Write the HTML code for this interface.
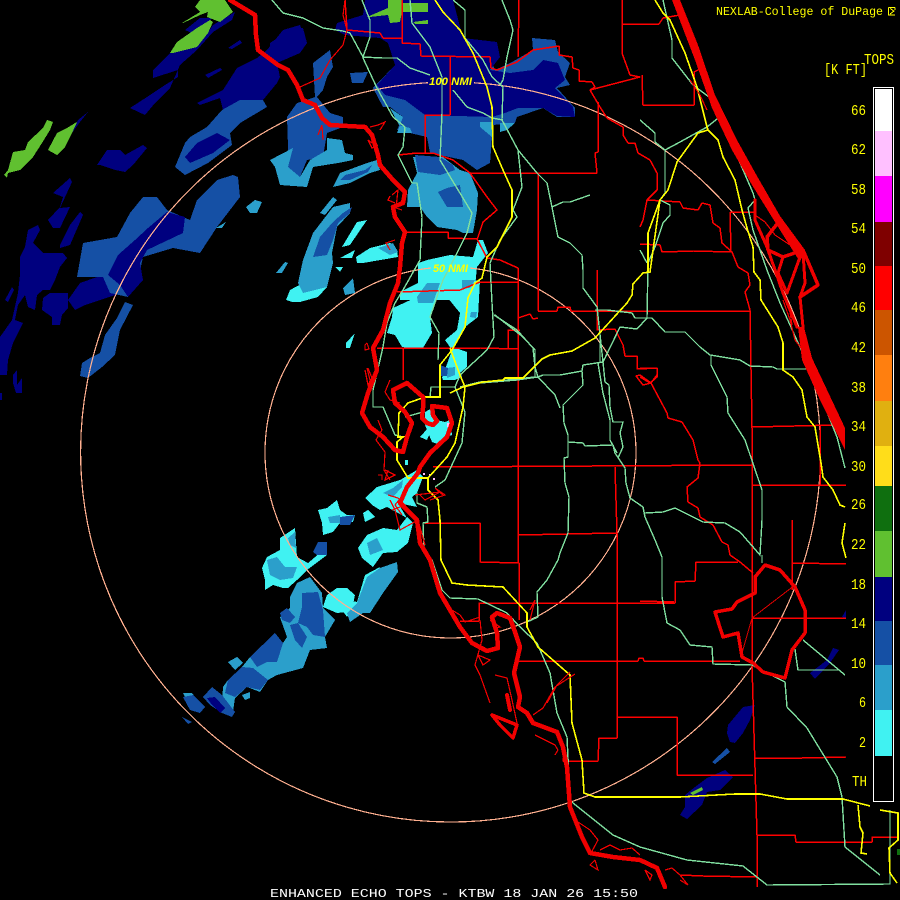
<!DOCTYPE html>
<html lang="en">
<head>
<meta charset="utf-8">
<title>Enhanced Echo Tops - KTBW</title>
<style>
html,body{margin:0;padding:0;background:#000;width:900px;height:900px;overflow:hidden}
svg{display:block;shape-rendering:crispEdges}
.c{fill:#40f2f2}.s{fill:#2b9fcb}.b{fill:#1550a5}.n{fill:#00007f}.g{fill:#60c030}
.r{fill:none;stroke:#ff0000;stroke-width:1.5;stroke-linejoin:round}
.rt{fill:none;stroke:#f00000;stroke-width:1.2}
.t{fill:none;stroke:#f00000;stroke-linejoin:round;stroke-linecap:round}
.v{fill:none;stroke:#80e0a0;stroke-width:1.4}
.y{fill:none;stroke:#ffff00;stroke-width:1.6}
text{font-family:"Liberation Mono",monospace;fill:#ffff00}
.l{font-size:14.5px}
</style>
</head>
<body>
<svg width="900" height="900" viewBox="0 0 900 900" xmlns="http://www.w3.org/2000/svg">
<rect width="900" height="900" fill="#000"/>

<!-- NAVY -->
<g class="n">
<polygon points="130,108 147,97 165,85 178,77 178,70 153,78 153,70 170,53 197,47 213,25 235,12 232,20 213,32 197,50 180,65 170,88 155,103 145,115"/>
<polygon points="197,103 223,90 237,68 257,58 267,50 283,30 300,25 307,43 300,53 277,63 280,77 277,83 263,100 240,107 223,110 220,98 200,105"/>
<polygon points="185,30 200,18 213,18 192,33"/>
<polygon points="228,48 240,40 242,43 232,49"/>
<polygon points="205,75 220,68 222,70 208,78"/>
<polygon points="270,43 290,30 303,28 307,43 300,53 277,63 280,77 270,88"/>
<polygon points="97,165 107,150 120,150 125,155 143,145 147,148 133,165 125,172 115,170 100,165"/>
<polygon points="48,220 60,207 63,197 53,193 70,178 72,182 60,208 70,207 60,228 53,228"/>
<polygon points="60,245 70,225 80,212 83,215 70,245 60,248"/>
<polygon points="20,257 25,247 28,230 38,225 40,230 33,243 43,253 63,253 67,258 60,267 55,280 50,290 43,290 37,295 35,310 28,307 25,295 18,305 15,320 23,323 13,343 8,360 7,375 0,375 0,337 12,320 18,293 20,275"/>
<polygon points="5,300 12,287 14,290 8,302"/>
<polygon points="13,375 17,370 17,385 22,378 22,393 16,393 13,383"/>
<polygon points="0,393 2,393 2,400 0,400"/>
<polygon points="42,310 43,298 50,293 68,293 68,308 62,315 60,325 52,325 52,317"/>
<polygon points="68,300 80,283 97,277 103,260 135,260 128,290 115,295 100,300 85,305 75,310"/>
<polygon points="727,733 728,725 743,707 755,705 750,720 743,733 735,743 730,742"/>
<polygon points="680,815 685,807 685,795 695,787 707,778 725,770 733,777 720,790 707,792 702,805 687,819"/>
<polygon points="810,673 827,660 833,648 839,650 830,663 815,679"/>
<polygon points="842,617 846,610 846,618"/>
</g>

<!-- BLUE 10 -->
<g class="b">
<polygon points="80,376 82,363 90,358 100,353 105,335 117,318 125,302 133,305 120,330 117,345 115,355 102,367 88,378"/>
<polygon points="175,167 185,143 190,137 207,127 222,110 240,100 263,100 267,107 240,123 230,133 232,145 208,163 185,175"/>
<polygon points="238,177 240,197 217,227 200,253 173,248 143,257 138,280 128,297 110,293 103,277 77,277 83,243 117,237 130,213 143,197 157,197 167,210 190,220 197,200 217,180 233,175"/>
<polygon points="373,88 383,107 390,107 403,117 397,130 427,137 430,153 463,160 477,170 490,163 493,125 515,123 517,117 543,108 557,117 575,117 575,108 557,88 570,85 565,77 570,63 558,52 555,40 532,38 533,50 512,62 495,70 490,57 400,60"/>
<polygon points="288,147 287,117 297,103 315,97 313,63 330,50 333,67 327,77 323,90 317,97 330,113 343,117 343,127 327,133 323,157 307,160 300,177 287,167"/>
<polygon points="350,73 368,72 363,83 352,83"/>
</g>
<g class="n">
<polygon points="388,43 380,38 345,35 335,30 337,23 363,15 365,0 453,0 463,38 497,42 500,57 490,70 510,73 533,70 543,60 558,63 565,80 555,88 573,107 575,117 557,116 543,108 518,108 505,113 492,117 425,115 405,100 385,95 377,85 395,65"/>
<polygon points="185,157 197,143 217,133 230,140 213,153 190,163"/>
<polygon points="167,212 185,217 183,233 147,250 140,263 143,280 128,297 120,285 108,275 118,255 135,240 148,228"/>
</g>

<!-- 6 KFT -->
<g class="s">
<polygon points="270,160 293,148 288,167 300,177 310,160 327,150 327,138 342,140 345,153 353,155 353,160 338,163 313,167 307,187 280,185 275,167"/>
<polygon points="333,187 340,173 367,163 377,160 380,170 370,173 350,183"/>
<polygon points="408,190 417,173 413,157 443,157 460,170 470,173 478,193 477,210 473,233 463,233 457,230 437,227 427,217 420,207 407,207"/>
<polygon points="480,122 493,122 492,137 480,127"/>
<polygon points="500,123 515,123 507,130 500,132"/>
<polygon points="390,108 403,117 397,133 412,133 410,128 399,125"/>
<polygon points="276,273 285,262 288,263 282,273"/>
<polygon points="320,213 333,197 337,200 325,215"/>
<polygon points="343,288 353,278 355,293 345,295"/>
<polygon points="246,207 255,200 262,202 257,213 250,213"/>
<polygon points="216,228 226,222 222,228"/>
</g>
<g class="b">
<polygon points="415,155 440,157 453,165 455,170 440,175 418,172"/>
<polygon points="447,188 460,185 463,207 447,207 438,192"/>
<polygon points="340,180 345,175 365,170 372,165 368,172 350,180"/>
</g>

<!-- CYAN -->
<g class="c">
<polygon points="400,292 418,283 418,263 427,260 450,255 473,257 478,240 483,240 488,253 477,267 475,287 467,300 400,300"/>
<polygon points="393,308 417,297 423,282 463,282 480,280 478,317 465,327 453,347 467,352 467,367 455,377 442,378 452,350 445,340 457,330 460,313 447,297 437,297 430,317 432,333 423,348 410,348 402,347 395,335 387,333 392,317"/>
<polygon points="286,300 290,290 303,283 327,287 318,297 300,302 292,302"/>
<polygon points="356,257 370,248 390,243 397,250 398,257 363,263 357,263"/>
<polygon points="342,247 357,222 367,220 350,245"/>
<polygon points="340,258 355,250 352,258"/>
<polygon points="335,267 343,267 340,272"/>
<polygon points="346,343 355,333 350,348 346,348"/>
<polygon points="442,377 455,368 457,362 462,377 455,380 443,380"/>
<polygon points="425,412 432,408 437,420 445,422 450,420 452,435 447,437 440,445 432,442 425,425"/>
<polygon points="420,437 428,428 432,428 427,440"/>
<polygon points="365,498 377,487 400,480 417,470 423,477 417,493 412,497 417,507 398,503 407,518 387,507 380,510 372,505"/>
<polygon points="405,460 408,460 408,465 405,465"/>
<polygon points="363,513 368,510 375,517 365,522"/>
<polygon points="318,510 327,508 337,500 340,510 347,515 355,515 353,522 340,523 333,532 323,535 322,523"/>
<polygon points="262,568 267,557 280,550 280,538 295,528 297,557 308,563 327,547 327,555 307,570 297,580 288,588 283,588 273,585 265,590 265,580"/>
<polygon points="358,548 367,535 383,528 397,530 407,517 413,523 408,543 397,552 383,553 373,567 362,558"/>
<polygon points="357,602 365,575 380,567 373,580 363,600 347,617 333,597"/>
<polygon points="327,595 337,588 347,588 355,595 353,605 347,612 337,613 323,607"/>
</g>
<g class="s">
<polygon points="298,283 303,260 313,233 333,207 350,203 350,213 337,227 332,253 333,263 327,287 303,293"/>
<polygon points="417,297 427,283 440,283 433,303 418,303"/>
<polygon points="462,280 475,280 470,288 462,288"/>
<polygon points="471,312 477,312 476,318 470,317"/>
<polygon points="378,248 393,243 398,252 390,255"/>
<polygon points="447,368 455,367 455,375 447,378"/>
<polygon points="383,493 393,488 403,480 402,487 393,497"/>
<polygon points="328,517 340,515 340,523 330,523"/>
<polygon points="267,560 277,557 285,567 297,567 293,578 280,580 270,575"/>
<polygon points="288,538 295,532 296,548 290,545"/>
<polygon points="367,543 377,538 383,550 370,555"/>
<polygon points="357,603 367,577 380,568 397,562 398,572 383,593 370,613 363,613 350,622 347,613"/>
<polygon points="280,617 290,608 290,597 297,583 310,577 322,593 323,608 335,620 325,637 327,648 310,650 303,668 277,675 268,680 260,692 247,687 235,698 233,712 228,713 222,703 223,687 228,680 242,667 250,657 275,633 283,643 287,637 282,623"/>
<polygon points="228,662 237,657 243,663 235,670"/>
<polygon points="242,695 250,692 250,698 245,700"/>
<polygon points="183,693 192,693 195,697 185,697"/>
</g>
<g class="b">
<polygon points="313,257 320,237 333,222 343,213 352,207 350,213 338,223 333,240 327,255"/>
<polygon points="440,365 448,368 447,376 441,376"/>
<polygon points="313,552 318,542 327,542 327,555 317,555"/>
<polygon points="302,593 318,592 323,610 325,637 313,635 307,627 298,623 302,607"/>
<polygon points="280,613 287,608 295,617 290,623 282,620"/>
<polygon points="290,625 298,623 307,637 302,648 295,640"/>
<polygon points="250,657 275,633 283,643 277,662 267,662 257,667"/>
<polygon points="228,680 242,667 253,668 268,680 260,690 247,687 235,697 225,693"/>
<polygon points="183,697 193,695 205,707 200,713 190,710"/>
<polygon points="203,697 212,687 222,695 235,712 232,717 222,713 210,705"/>
<polygon points="182,717 192,722 188,724"/>
<polygon points="340,517 355,515 350,525 340,525"/>
<polygon points="712,762 727,748 730,752 715,764"/>
</g>
<polygon class="n" points="207,698 215,697 225,708 220,713 212,705"/>
<g fill="#ffc0ff">
<rect x="447" y="423" width="3" height="4"/><rect x="423" y="473" width="2" height="2"/>
<rect x="433" y="478" width="2" height="2"/><rect x="429" y="474" width="2" height="2"/>
</g>

<!-- GREEN echoes -->
<g class="g">
<polygon points="182,23 200,12 195,7 200,0 225,0 233,12 220,22 207,17 208,12 200,15 183,23"/>
<polygon points="170,53 177,42 197,28 210,20 213,22 208,33 197,47 173,53"/>
<polygon points="4,175 8,170 13,152 25,150 28,142 43,128 47,120 53,122 50,130 42,143 33,157 20,170 8,173 7,178"/>
<polygon points="48,150 57,133 67,128 80,120 72,133 65,147 57,155"/>
<polygon points="367,17 388,8 388,0 402,0 402,3 428,3 428,12 402,12 400,22 390,23 388,15 370,17"/>
<polygon points="413,22 428,20 428,24 415,24"/>
<polygon points="690,793 702,787 703,790 693,795"/>
</g>
<polygon class="n" points="78,120 88,112 80,122 72,133"/>
<rect x="897" y="849" width="3" height="6" fill="#0f6f0f"/>

<!-- Range rings -->
<g fill="none" stroke="#ffb090" stroke-width="1.2">
<path d="M474 82.75 A370 370 0 1 1 428 82.7"/>
<path d="M470 268 A185.5 185.5 0 1 1 431 268"/>
</g>

<!-- COUNTY LINES -->
<g class="r">
<polyline points="345,0 347,30 380,33 383,38 402,38 402,0"/>
<polyline points="402,38 402,43 420,44 421,56 490,57 491,68 497,70 517,62 533,50 559,46 559,55 572,57 573,68 579,70 579,81 592,82 595,87 590,90 640,77 630,75 622,53 622,0"/>
<polyline points="450,57 450,115 425,115 425,153"/>
<polyline points="518,57 519,0"/>
<polyline points="622,24 659,24 663,18 680,15"/>
<polyline points="642,75 643,105 694,105 694,72 700,69"/>
<polyline points="590,90 600,107 607,118 623,127 623,135 628,143 635,143 638,153 650,160 657,173 657,190 647,200 643,220 640,227"/>
<polyline points="598,102 598,152 595,153 597,173 470,173"/>
<polyline points="538,173 538,311"/>
<polyline points="398,155 417,153 433,153 453,160 470,173 487,197 497,210 483,222 477,240"/>
<polyline points="405,232 448,232 448,238 477,239 487,258 500,260 518,268 518,282 480,282 460,290 397,292"/>
<polyline points="518,268 518,349 480,348 377,348"/>
<polyline points="538,311 557,311 558,307 570,307 571,311 750,311"/>
<polyline points="518,318 530,314 533,319 538,318"/>
<polyline points="508,348 508,330 520,330"/>
<polyline points="403,348 403,380"/>
<polyline points="597,270 597,330 615,329 623,345 625,356 637,356 637,369 657,368 657,375 651,383 643,385 636,376 640,375 651,383 667,413 668,418 682,422 693,440 698,460 700,463 698,478 687,487 688,502 698,508 700,517 713,525 722,542 728,545 730,555 740,562 753,573"/>
<polyline points="433,467 752,465"/>
<polyline points="518,349 518,563"/>
<polyline points="425,523 480,523 480,562 519,563 519,620"/>
<polyline points="518,535 617,533"/>
<polyline points="615,467 617,533 617,738 599,738 598,761 563,761 563,758"/>
<polyline points="479,621 479,603 675,603 675,582 695,581 696,562 738,562"/>
<polyline points="460,621 479,621"/>
<polyline points="519,661 638,661 639,658 643,658 644,661 692,661 740,661"/>
<polyline points="618,717 677,717 677,775 753,775"/>
<polyline points="640,601 674,602"/>
<polyline points="792,520 792,590"/>
<polyline points="792,563 846,564"/>
<polyline points="752,618 846,618"/>
<polyline points="752,428 752,665 757,835 757,887"/>
<polyline points="755,758 802,758 846,757"/>
<polyline points="757,835 795,835 796,842 872,842 872,837 898,837"/>
<polyline points="680,875 703,876 757,877"/>
<polyline points="647,200 680,202 683,208 698,210 702,203 710,205 713,223 720,228 722,243 732,252 738,267 748,273 750,285 745,292 750,310 752,428"/>
<polyline points="640,244 660,245 662,252 693,251 732,252"/>
<polyline points="730,212 731,252"/>
<polyline points="730,212 755,212"/>
<polyline points="640,377 650,383 657,377 657,368 640,368"/>
<polyline points="752,427 837,425"/>
<polyline points="820,425 820,485"/>
<polyline points="752,485 846,485"/>
</g>
<polyline points="742,653 752,618 795,585" fill="none" stroke="#e00000" stroke-width="1"/>

<!-- ROADS -->
<g class="v">
<polyline points="272,0 283,13 303,18 323,28 343,31 350,33 363,57 370,37 370,20 362,0"/>
<polyline points="362,57 383,58 397,58 410,68 430,75"/>
<polyline points="363,58 377,88 393,117 405,127 403,147 398,155 412,183 417,183 422,217 420,260 403,290 395,303 387,323 383,347 373,390 373,407 383,407 395,435 403,437"/>
<polyline points="410,0 412,23 430,47 442,77 442,113 440,160 472,213 467,233 455,257 443,280 430,317 439,333 438,360"/>
<polyline points="453,0 465,10 465,38 483,60 492,77 503,87 502,120 518,150 522,187 513,210 517,217 500,240 490,263 492,303 494,337 487,350 460,375 455,387 431,387 430,397"/>
<polyline points="502,0 510,20 513,30 507,57 503,80 500,85"/>
<polyline points="453,90 467,107 483,113 492,118 503,120"/>
<polyline points="518,150 537,173 547,183 552,207 563,202 570,202 590,195"/>
<polyline points="552,207 558,237 570,243 582,255 583,270 583,288 597,307 603,362"/>
<polyline points="494,315 517,330 533,348 535,367 538,377 555,395 560,408"/>
<polyline points="480,383 517,380 538,377 543,375 560,375 582,371 583,365 603,362"/>
<polyline points="582,371 583,385 563,405 564,423 568,435 568,457 564,458 565,483 569,497 568,533 560,553 558,560 547,580 537,592 538,617 527,622"/>
<polyline points="568,442 583,443 585,446 613,445 615,453 625,468 626,483 630,498 643,507 645,517 655,540 662,557 662,597 667,623 680,630 690,645 712,647 713,664 752,665 765,672 785,682 787,707 807,728 837,777 842,797 845,847 880,875"/>
<polyline points="645,513 663,512 675,508 703,522 725,523 740,532 760,555 762,520 762,490 745,440 728,413 727,397 711,365 711,355"/>
<polyline points="595,310 607,310 632,313 635,318 652,318 665,332 685,332 700,347 710,355 740,360 750,366 773,367 777,369 807,369"/>
<polyline points="640,120 655,133 655,142 665,150 665,193 660,200 670,205 670,215 663,223 655,247 648,263 647,318 637,329 620,327 603,362"/>
<polyline points="640,250 647,263"/>
<polyline points="665,150 680,142 707,127 722,115"/>
<polyline points="600,337 600,362"/>
<polyline points="603,362 605,382 609,385 610,407 613,422 623,422 620,433 623,447 618,458"/>
<polyline points="598,363 603,393 610,420 610,440 617,453"/>
<polyline points="663,0 672,40 672,58 693,85 713,100 753,193 755,200 748,208 753,230 767,270 780,303 800,347 813,377 837,437 845,468"/>
<polyline points="495,315 523,337 535,350 535,377 507,380 480,382 460,387"/>
<polyline points="460,375 455,387 465,412 462,443 445,480 435,487"/>
<polyline points="405,417 423,412"/>
<polyline points="417,493 417,503 427,507 428,522 423,523 424,550 432,560 442,590 450,598 478,599 507,613 520,627 537,643 550,673 557,713 567,737 570,800 573,803 613,835 640,847 687,860 743,866 767,885 890,884 890,810"/>
<polyline points="803,640 845,675"/>
<polyline points="795,649 798,670 840,670"/>
<polyline points="762,555 762,563"/>
</g>

<!-- HIGHWAYS -->
<g class="y">
<polyline points="435,0 443,12 460,30 473,53 487,87 492,107 493,147 503,170 512,190 512,217 497,247 487,257 482,278 475,283 468,298 465,327 452,350 440,365 440,397 425,397 408,403 399,413 398,437 403,437 397,442 397,460 408,478 428,478 447,457 455,443 463,407 465,387 460,375 450,348"/>
<polyline points="428,478 428,490 438,500 440,520 441,560 452,583 467,585 503,587 527,613 527,627 538,647 570,675 572,723 582,760 584,793 595,797 680,797 735,794 760,794 787,799 843,799 870,806"/>
<polyline points="450,393 463,387 483,382 503,380 505,378 523,378 542,359 550,355 572,351 595,338 627,303 632,295 633,284 643,273 650,272 660,200 668,190 677,162 698,133 708,130"/>
<polyline points="648,273 648,233 660,200"/>
<polyline points="655,0 663,13 670,20 685,53 697,87 707,127 708,130 718,140 723,157 735,180 742,210 747,228 753,247 754,272 760,280 761,300 778,327 783,343 783,370 793,377 802,390 807,417 815,427 821,463 823,477 833,490 840,505 845,507"/>
<polyline points="845,523 842,543 846,558"/>
<polyline points="858,805 860,827 863,833 861,853 867,854"/>
<polyline points="880,810 898,813 898,840 889,848 890,873 897,883"/>
</g>

<!-- THICK COAST -->
<g class="t">
<polyline stroke-width="4.5" points="230,0 255,15 256,35 258,50 278,65 288,70 297,85 303,100 315,105 322,118 330,125 365,127 372,135 378,155 380,165 393,180 405,192 403,203 393,207 395,217 405,232 402,243 400,267 398,283 390,303 383,330 373,348 377,370 368,393 362,413 370,427 383,437 395,450 403,452 407,437 412,423 405,412 395,403 393,390 407,383 423,397 423,408 422,418 427,423 433,425 437,421 433,415 432,406 447,408 452,423 447,437 430,453 420,467 418,473 407,487 400,503 417,520 420,543 430,560 440,593 460,627 472,643 487,651 498,648 497,633 492,617 497,613 510,618 515,632 520,647 514,673 520,697 518,707 527,713 533,723 557,732 563,747 567,767 570,807 582,837 590,853 613,857 640,860 657,868 665,887"/>
<polyline stroke-width="3.5" points="492,715 517,725 513,738 500,725 492,715"/>
<polyline stroke-width="4" points="507,695 510,710"/>
<polyline stroke-width="3.5" points="755,593 755,577 765,565 780,570 795,587 805,610 805,633 792,650 785,678 763,672 753,663 742,657 738,633 723,637 715,612 732,609 737,602 755,593"/>
<polyline stroke-width="3.5" points="780,220 767,237 768,250 783,257 803,250"/>
<polyline stroke-width="3" points="755,200 755,220 767,247 783,293 797,327"/>
<polyline stroke-width="3" points="783,257 778,273 787,293 800,257"/>
<polyline stroke-width="3" points="803,252 805,283 800,297 803,327"/>
<polyline stroke-width="3.5" points="803,250 818,285 800,297"/>
</g>
<polygon fill="#f00000" points="672,0 680,0 698,45 715,95 737,140 757,176 780,216 805,250 800,262 775,222 752,185 732,150 712,108 695,60"/>
<polygon fill="#f00000" points="798,327 804,327 812,358 845,428 845,450 820,400 802,360"/>

<!-- THIN COAST -->
<g class="rt">
<polyline points="345,0 343,15 347,30 343,45 330,60 320,78 300,87"/>
<polyline points="370,127 378,125 385,122 380,130"/>
<polyline points="372,143 368,140 372,148 378,145"/>
<polyline points="318,135 322,125 323,140"/>
<polyline points="390,196 388,200 395,203"/>
<polyline points="390,250 386,243 395,240"/>
<polyline points="392,195 398,190 396,208 402,210"/>
<polyline points="367,343 365,345 365,350 369,349 367,343"/>
<polyline points="367,368 370,380 368,395 366,400"/>
<polyline points="365,370 368,385 372,378 368,368"/>
<polyline points="390,380 385,392 390,400 400,403"/>
<polyline points="378,420 382,430 376,440 385,452 384,470 390,480"/>
<polyline points="385,470 395,475 385,480 388,470"/>
<polyline points="378,475 382,475 382,480"/>
<polyline points="390,500 395,510 400,530 418,520 425,545"/>
<polyline points="388,495 398,498 405,505 392,510"/>
<polyline points="415,495 440,492 425,500 420,495"/>
<polyline points="430,500 445,495 435,488 443,495"/>
<polyline points="407,490 395,505 402,515"/>
<polyline points="447,607 460,615 465,622 480,617"/>
<polyline points="480,620 482,640 475,665 480,675 490,703"/>
<polyline points="495,675 507,678 512,700 517,723"/>
<polyline points="533,715 543,708 555,687 575,674"/>
<polyline points="547,703 557,685 570,672"/>
<polyline points="490,620 500,627 495,628"/>
<polyline points="530,610 535,600 530,620"/>
<polyline points="478,655 490,660 483,665 478,655"/>
<polyline points="535,735 555,745 558,750 555,755"/>
<polyline points="575,820 590,830 598,840 590,855"/>
<polyline points="600,850 610,845 620,850 632,848 640,855"/>
<polyline points="665,870 672,868 680,875 688,885 680,880"/>
<polyline points="595,860 598,870 590,865 595,860"/>
<polyline points="645,870 652,875 650,880 645,870"/>
<polyline points="755,215 765,222 775,235 790,245"/>
<polyline points="783,300 790,320 795,340 810,360"/>
<polyline points="690,80 700,95 707,110"/>
<polyline points="787,300 790,312 792,325"/>
</g>

<!-- NMI LABELS -->
<text x="429" y="85" font-size="11" font-weight="bold" font-style="italic" textLength="43" lengthAdjust="spacingAndGlyphs" style="font-family:'Liberation Sans',sans-serif">100 NMI</text>
<text x="433" y="272" font-size="11" font-weight="bold" font-style="italic" textLength="35" lengthAdjust="spacingAndGlyphs" style="font-family:'Liberation Sans',sans-serif">50 NMI</text>

<!-- COLOR BAR -->
<rect x="873.5" y="87.5" width="20" height="714" fill="#000" stroke="#fff" stroke-width="1.4"/>
<g>
<rect x="875" y="89" width="17" height="42" fill="#ffffff"/>
<rect x="875" y="131" width="17" height="45" fill="#ffc0ff"/>
<rect x="875" y="176" width="17" height="46" fill="#ff00ff"/>
<rect x="875" y="222" width="17" height="44" fill="#7f0000"/>
<rect x="875" y="266" width="17" height="44" fill="#ff0000"/>
<rect x="875" y="310" width="17" height="45" fill="#cc5500"/>
<rect x="875" y="355" width="17" height="46" fill="#ff7f0f"/>
<rect x="875" y="401" width="17" height="45" fill="#e0b010"/>
<rect x="875" y="446" width="17" height="40" fill="#ffdd1a"/>
<rect x="875" y="486" width="17" height="45" fill="#0f6f0f"/>
<rect x="875" y="531" width="17" height="46" fill="#60c030"/>
<rect x="875" y="577" width="17" height="44" fill="#00007f"/>
<rect x="875" y="621" width="17" height="44" fill="#1550a5"/>
<rect x="875" y="665" width="17" height="45" fill="#2b9fcb"/>
<rect x="875" y="710" width="17" height="46" fill="#40f2f2"/>
</g>

<!-- TEXT -->
<text x="716" y="15" font-size="12" textLength="167" lengthAdjust="spacingAndGlyphs">NEXLAB-College of DuPage</text>
<path d="M888.5 7.5H895M888.5 7.5V15H895M890 8.5L894 11 890 14M895 7.5V10" fill="none" stroke="#ffff00" stroke-width="1"/>
<text x="864" y="64" class="l" textLength="30" lengthAdjust="spacingAndGlyphs">TOPS</text>
<text x="824" y="74" class="l" textLength="43" lengthAdjust="spacingAndGlyphs">[K FT]</text>
<g>
<text class="l" x="851" y="115" textLength="15" lengthAdjust="spacingAndGlyphs">66</text>
<text class="l" x="851" y="154" textLength="15" lengthAdjust="spacingAndGlyphs">62</text>
<text class="l" x="851" y="194" textLength="15" lengthAdjust="spacingAndGlyphs">58</text>
<text class="l" x="851" y="233" textLength="15" lengthAdjust="spacingAndGlyphs">54</text>
<text class="l" x="851" y="273" textLength="15" lengthAdjust="spacingAndGlyphs">50</text>
<text class="l" x="851" y="312" textLength="15" lengthAdjust="spacingAndGlyphs">46</text>
<text class="l" x="851" y="352" textLength="15" lengthAdjust="spacingAndGlyphs">42</text>
<text class="l" x="851" y="392" textLength="15" lengthAdjust="spacingAndGlyphs">38</text>
<text class="l" x="851" y="431" textLength="15" lengthAdjust="spacingAndGlyphs">34</text>
<text class="l" x="851" y="471" textLength="15" lengthAdjust="spacingAndGlyphs">30</text>
<text class="l" x="851" y="509" textLength="15" lengthAdjust="spacingAndGlyphs">26</text>
<text class="l" x="851" y="549" textLength="15" lengthAdjust="spacingAndGlyphs">22</text>
<text class="l" x="851" y="589" textLength="15" lengthAdjust="spacingAndGlyphs">18</text>
<text class="l" x="851" y="628" textLength="15" lengthAdjust="spacingAndGlyphs">14</text>
<text class="l" x="851" y="668" textLength="15" lengthAdjust="spacingAndGlyphs">10</text>
<text class="l" x="859" y="707" textLength="7" lengthAdjust="spacingAndGlyphs">6</text>
<text class="l" x="859" y="747" textLength="7" lengthAdjust="spacingAndGlyphs">2</text>
<text class="l" x="852" y="786" textLength="15" lengthAdjust="spacingAndGlyphs">TH</text>
</g>
<text x="270" y="897" font-size="12" style="fill:#fff" textLength="368" lengthAdjust="spacingAndGlyphs">ENHANCED ECHO TOPS - KTBW 18 JAN 26 15:50</text>
</svg>
</body>
</html>
